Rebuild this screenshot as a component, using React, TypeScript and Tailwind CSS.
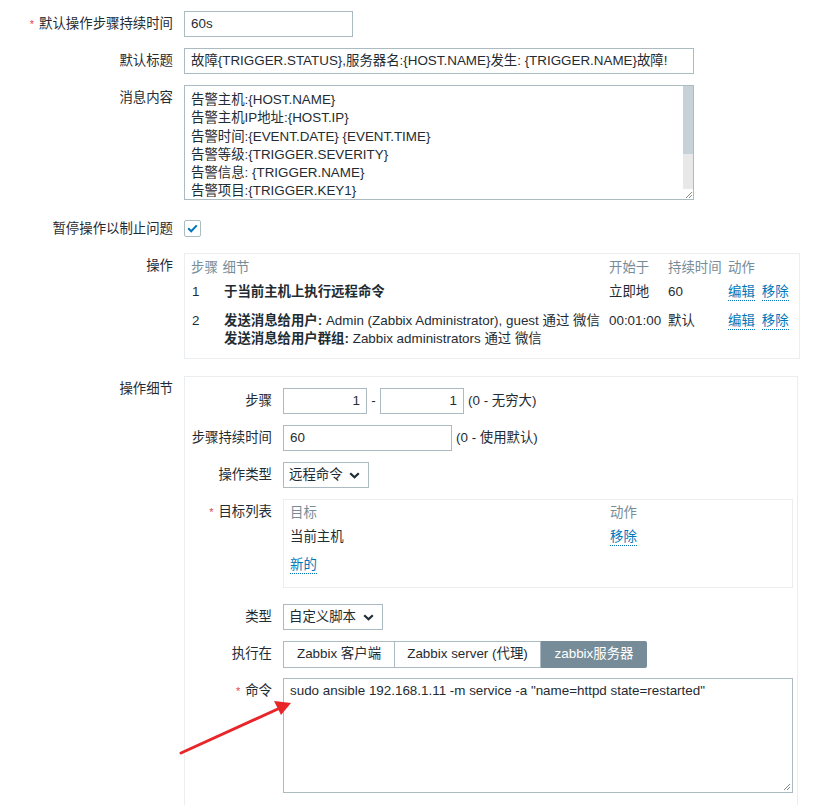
import React from "react";

const FONT = "font-['Liberation_Sans',Arial,'Noto_Sans_CJK_SC',sans-serif]";

function Req() {
  return <span className="text-[#e54251] text-[11px] mr-[5px] align-top">*</span>;
}

function Row({
  label,
  required,
  labelWidth,
  className,
  children,
}: {
  label: string;
  required?: boolean;
  labelWidth: string;
  className?: string;
  children: React.ReactNode;
}) {
  return (
    <div className={`flex items-start ${className ?? ""}`}>
      <div className={`${labelWidth} shrink-0 text-right leading-[26px] whitespace-nowrap`}>
        {required && <Req />}
        {label}
      </div>
      <div className="ml-[11px] min-w-0">{children}</div>
    </div>
  );
}

function Chevron() {
  return (
    <svg width="11" height="7" viewBox="0 0 11 7" className="shrink-0">
      <path d="M1.2 1.2 L5.5 5.3 L9.8 1.2" fill="none" stroke="#1f2c33" strokeWidth="2.2" />
    </svg>
  );
}

function ResizeGrip() {
  return (
    <svg width="9" height="9" viewBox="0 0 9 9">
      <path d="M8 2 L2 8 M8 5 L5 8" stroke="#8a8a8a" strokeWidth="1" />
    </svg>
  );
}

function LinkText({ children }: { children: React.ReactNode }) {
  return (
    <span className="inline-block text-[#0275b8] leading-[17px] border-b border-dotted border-[#0275b8]">
      {children}
    </span>
  );
}

const messageLines = [
  "告警主机:{HOST.NAME}",
  "告警主机IP地址:{HOST.IP}",
  "告警时间:{EVENT.DATE} {EVENT.TIME}",
  "告警等级:{TRIGGER.SEVERITY}",
  "告警信息: {TRIGGER.NAME}",
  "告警项目:{TRIGGER.KEY1}",
];

export default function App() {
  return (
    <div className={`relative w-[832px] h-[805px] overflow-hidden bg-white text-[#1f2c33] text-[13.4px] ${FONT}`}>
      <div className="pt-[11px]">
        <Row label="默认操作步骤持续时间" required labelWidth="w-[173px]">
          <div className="w-[169px] h-[26px] border border-[#acbbc2] px-[6px] flex items-center">60s</div>
        </Row>

        <Row label="默认标题" labelWidth="w-[173px]" className="mt-[11px]">
          <div className="w-[510px] h-[26px] border border-[#acbbc2] px-[6px] flex items-center whitespace-nowrap overflow-hidden">
            故障{"{TRIGGER.STATUS}"},服务器名:{"{HOST.NAME}"}发生: {"{TRIGGER.NAME}"}故障!
          </div>
        </Row>

        <Row label="消息内容" labelWidth="w-[173px]" className="mt-[11px]">
          <div className="w-[510px] h-[115px] border border-[#acbbc2] flex">
            <div className="flex-1 pl-[6px] pt-[5px] leading-[18.3px] overflow-hidden whitespace-nowrap">
              {messageLines.map((l) => (
                <div key={l}>{l}</div>
              ))}
            </div>
            <div className="w-[10px] flex flex-col">
              <div className="h-[68px] bg-[#c6d1d8]" />
              <div className="flex-1 bg-[#e8e8e8]" />
              <div className="h-[10px] bg-white flex items-end justify-end">
                <ResizeGrip />
              </div>
            </div>
          </div>
        </Row>

        <div className="flex items-start mt-[20px]">
          <div className="w-[173px] shrink-0 text-right leading-[18px]">暂停操作以制止问题</div>
          <div className="ml-[11px] w-[17px] h-[17px] border border-[#acbbc2] rounded-[2px] flex items-center justify-center">
            <svg width="11" height="9" viewBox="0 0 11 9">
              <path d="M1.2 4.2 L4.2 7.2 L9.8 1.4" fill="none" stroke="#0275b8" strokeWidth="2" />
            </svg>
          </div>
        </div>

        <Row label="操作" labelWidth="w-[173px]" className="mt-[15px]">
          <div className="w-[616px] h-[106px] border border-[#ebeef0] pl-[6px] pt-[4px]">
            <div className="grid grid-cols-[33px_385px_59px_60px_1fr] whitespace-nowrap">
              <div className="text-[#768d99] leading-[20px] col-span-2">
                步骤 <span className="ml-[1px]">细节</span>
              </div>
              <div className="text-[#768d99] leading-[20px]">开始于</div>
              <div className="text-[#768d99] leading-[20px]">持续时间</div>
              <div className="text-[#768d99] leading-[20px]">动作</div>

              <div className="leading-[28px] pl-[1px]">1</div>
              <div className="leading-[28px] font-bold">于当前主机上执行远程命令</div>
              <div className="leading-[28px]">立即地</div>
              <div className="leading-[28px]">60</div>
              <div className="flex gap-[7px] items-center">
                <LinkText>编辑</LinkText>
                <LinkText>移除</LinkText>
              </div>

              <div className="leading-[18px] pt-[6px] pl-[1px]">2</div>
              <div className="leading-[18px] pt-[6px]">
                <div>
                  <span className="font-bold">发送消息给用户:</span> Admin (Zabbix Administrator), guest 通过 微信
                </div>
                <div>
                  <span className="font-bold">发送消息给用户群组:</span> Zabbix administrators 通过 微信
                </div>
              </div>
              <div className="leading-[18px] pt-[6px]">00:01:00</div>
              <div className="leading-[18px] pt-[6px]">默认</div>
              <div className="flex gap-[7px] items-start pt-[6px]">
                <LinkText>编辑</LinkText>
                <LinkText>移除</LinkText>
              </div>
            </div>
          </div>
        </Row>

        <Row label="操作细节" labelWidth="w-[173px]" className="mt-[17px]">
          <div className="w-[614px] h-[440px] border border-[#ebeef0] pt-[11px]">
            <Row label="步骤" labelWidth="w-[87px]">
              <div className="flex items-center">
                <div className="w-[84px] h-[26px] border border-[#acbbc2] px-[6px] flex items-center justify-end">1</div>
                <div className="w-[13px] text-center">-</div>
                <div className="w-[84px] h-[26px] border border-[#acbbc2] px-[6px] flex items-center justify-end">1</div>
                <div className="ml-[4px] whitespace-nowrap">(0 - 无穷大)</div>
              </div>
            </Row>

            <Row label="步骤持续时间" labelWidth="w-[87px]" className="mt-[11px]">
              <div className="flex items-center">
                <div className="w-[169px] h-[26px] border border-[#acbbc2] px-[6px] flex items-center">60</div>
                <div className="ml-[4px] whitespace-nowrap">(0 - 使用默认)</div>
              </div>
            </Row>

            <Row label="操作类型" labelWidth="w-[87px]" className="mt-[11px]">
              <div className="w-[86px] h-[26px] border border-[#acbbc2] pl-[5px] pr-[8px] flex items-center justify-between whitespace-nowrap">
                远程命令
                <Chevron />
              </div>
            </Row>

            <Row label="目标列表" required labelWidth="w-[87px]" className="mt-[11px]">
              <div className="w-[510px] h-[89px] border border-[#ebeef0] pl-[6px] pt-[3px]">
                <div className="grid grid-cols-[320px_1fr] whitespace-nowrap">
                  <div className="text-[#768d99] leading-[20px]">目标</div>
                  <div className="text-[#768d99] leading-[20px]">动作</div>
                  <div className="leading-[28px]">当前主机</div>
                  <div className="flex items-center">
                    <LinkText>移除</LinkText>
                  </div>
                  <div className="h-[28px] flex items-center">
                    <LinkText>新的</LinkText>
                  </div>
                </div>
              </div>
            </Row>

            <Row label="类型" labelWidth="w-[87px]" className="mt-[16px]">
              <div className="w-[100px] h-[26px] border border-[#acbbc2] pl-[5px] pr-[8px] flex items-center justify-between whitespace-nowrap">
                自定义脚本
                <Chevron />
              </div>
            </Row>

            <Row label="执行在" labelWidth="w-[87px]" className="mt-[11px]">
              <div className="flex h-[27px] whitespace-nowrap">
                <div className="w-[112px] border border-[#acbbc2] flex items-center justify-center">Zabbix 客户端</div>
                <div className="w-[146px] border-y border-r border-[#acbbc2] flex items-center justify-center">
                  Zabbix server (代理)
                </div>
                <div className="w-[106px] bg-[#768d99] text-white rounded-r-[2px] flex items-center justify-center">
                  zabbix服务器
                </div>
              </div>
            </Row>

            <Row label="命令" required labelWidth="w-[87px]" className="mt-[10px]">
              <div className="relative w-[510px] h-[115px] border border-[#acbbc2] pl-[6px] pt-[3px] leading-[18px] whitespace-nowrap">
                sudo ansible 192.168.1.11 -m service -a "name=httpd state=restarted"
                <div className="absolute right-[1px] bottom-[1px]">
                  <ResizeGrip />
                </div>
              </div>
            </Row>
          </div>
        </Row>
      </div>

      <svg className="absolute left-0 top-0 pointer-events-none" width="832" height="805">
        <line x1="181" y1="753" x2="280" y2="708" stroke="#e8262a" strokeWidth="3" strokeLinecap="round" />
        <polygon points="291,703 274,701 281,715" fill="#e8262a" />
      </svg>
    </div>
  );
}
